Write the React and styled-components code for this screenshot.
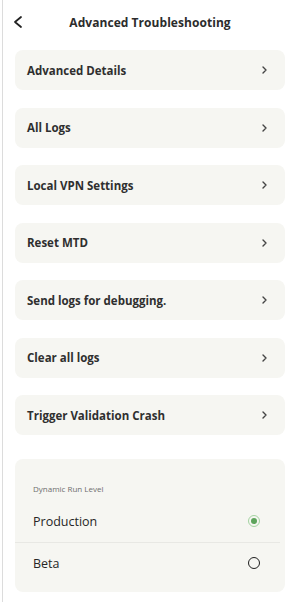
import React, { useState } from 'react';
import styled, { createGlobalStyle } from 'styled-components';

const GlobalStyle = createGlobalStyle`
    html, body {
        margin: 0;
        padding: 0;
        background: #ffffff;
    }
    body {
        font-family: "Open Sans", "Liberation Sans", sans-serif;
        color: #2f2f2f;
    }
`;

const Screen = styled.div`
    margin-left: 2px;
    border-left: 1px solid #dcdcdc;
    min-height: 602px;
    padding: 0 7px 0 12px;
    box-sizing: border-box;
`;

const Header = styled.header`
    position: relative;
    height: 44px;
    display: flex;
    align-items: center;
    justify-content: center;
`;

const BackButton = styled.button`
    position: absolute;
    left: -3px;
    top: 15px;
    width: 12px;
    height: 14px;
    padding: 0;
    border: 0;
    background: none;
    display: flex;
    align-items: center;
    justify-content: center;
`;

const Title = styled.h1`
    margin: 0;
    font-size: 12px;
    font-weight: 700;
    color: #2c2c2c;
    letter-spacing: 0.05px;
`;

const List = styled.div`
    display: flex;
    flex-direction: column;
    gap: 17.5px;
    padding-top: 6px;
`;

const Card = styled.div`
    background: #f6f6f2;
    border-radius: 8px;
`;

const LinkRow = styled(Card)`
    height: 40px;
    display: flex;
    align-items: center;
    justify-content: space-between;
    padding: 0 18px 0 12px;
    font-size: 11.5px;
    font-weight: 700;
    color: #2f2f2f;
`;

const RadioCard = styled(Card)`
    margin-top: 6px;
    padding: 24px 0 8px 0;
`;

const GroupLabel = styled.div`
    font-size: 8px;
    line-height: 11px;
    color: #6e6e6e;
    padding-left: 18px;
    margin-bottom: 7px;
`;

const RadioRow = styled.div`
    height: 41px;
    display: flex;
    align-items: center;
    justify-content: space-between;
    padding: 0 20px 0 18px;
    margin-right: 5px;
    font-size: 12.5px;
    font-weight: 500;
    color: #262626;
    border-top: ${(p) => (p.$divided ? '1px solid #e8e8e4' : '0')};
`;

const Radio = styled.span`
    width: 12px;
    height: 12px;
    box-sizing: border-box;
    border-radius: 50%;
    border: 1.7px solid ${(p) => (p.$checked ? '#a4d3a2' : '#1f1f1f')};
    display: flex;
    align-items: center;
    justify-content: center;
    &::after {
        content: '';
        width: 6px;
        height: 6px;
        border-radius: 50%;
        background: #5da45c;
        display: ${(p) => (p.$checked ? 'block' : 'none')};
    }
`;

const Chevron = ({ w = 5, h = 8, left = false, color = '#444', stroke = 1.4 }) => (
    <svg width={w} height={h} viewBox={`0 0 ${w} ${h}`} style={{ overflow: 'visible' }}>
        <path
            d={left
                ? `M${w - 1} 1 L1 ${h / 2} L${w - 1} ${h - 1}`
                : `M1 1 L${w - 1} ${h / 2} L1 ${h - 1}`}
            fill='none'
            stroke={color}
            strokeWidth={stroke}
            strokeLinecap='round'
            strokeLinejoin='round'
        />
    </svg>
);

const LINKS = [
    'Advanced Details',
    'All Logs',
    'Local VPN Settings',
    'Reset MTD',
    'Send logs for debugging.',
    'Clear all logs',
    'Trigger Validation Crash',
];

const LEVELS = ['Production', 'Beta'];

const App = () => {
    const [level, setLevel] = useState('Production');
    return (
        <>
            <GlobalStyle />
            <Screen>
                <Header>
                    <BackButton aria-label='Back'>
                        <Chevron w={8} h={12} left color='#222' stroke={1.8} />
                    </BackButton>
                    <Title>Advanced Troubleshooting</Title>
                </Header>
                <List>
                    {LINKS.map((label) => (
                        <LinkRow key={label}>
                            <span>{label}</span>
                            <Chevron />
                        </LinkRow>
                    ))}
                    <RadioCard>
                        <GroupLabel>Dynamic Run Level</GroupLabel>
                        {LEVELS.map((name, i) => (
                            <RadioRow
                                key={name}
                                $divided={i > 0}
                                onClick={() => setLevel(name)}
                            >
                                <span>{name}</span>
                                <Radio $checked={level === name} />
                            </RadioRow>
                        ))}
                    </RadioCard>
                </List>
            </Screen>
        </>
    );
};

export default App;
